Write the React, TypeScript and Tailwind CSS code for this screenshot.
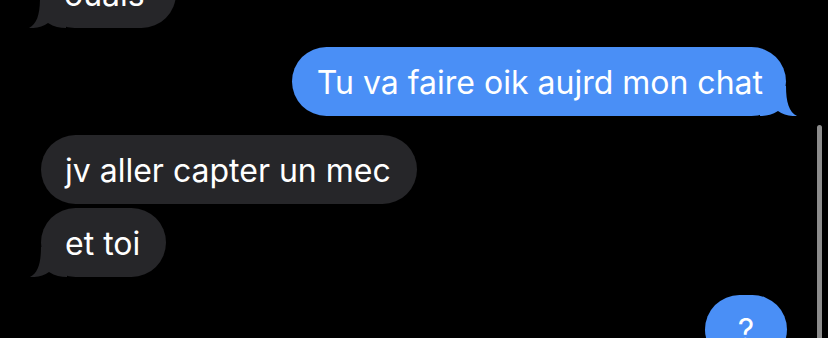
import React from 'react';

const TailRight = ({ color }: { color: string }) => (
	<svg
		className="absolute bottom-0 right-[-11px]"
		width="37"
		height="30"
		viewBox="0 0 37 30"
	>
		<path
			d="M0 30 L0 0 L26 0 C26 16 29 26 37 30 C30 30.5 23 28.5 18 25 C12 29 6 30 0 30 Z"
			fill={color}
		/>
	</svg>
);

const TailLeft = ({ color }: { color: string }) => (
	<svg
		className="absolute bottom-0 left-[-11px]"
		width="37"
		height="30"
		viewBox="0 0 37 30"
	>
		<path
			d="M37 30 L37 0 L11 0 C11 16 8 26 0 30 C7 30.5 14 28.5 19 25 C25 29 31 30 37 30 Z"
			fill={color}
		/>
	</svg>
);

const Received = ({
	text,
	tail = false,
	wide = false,
}: {
	text: string;
	tail?: boolean;
	wide?: boolean;
}) => (
	<div
		className={`relative flex h-[69px] w-fit items-center rounded-[35px] bg-[#262629] pt-[3px] pl-[24px] text-[32px] text-white ${
			wide ? 'pr-[31px]' : 'pr-[26px]'
		}`}
	>
		<span className="relative z-10 leading-none">{text}</span>
		{tail && <TailLeft color="#262629" />}
	</div>
);

const Sent = ({ text, tail = false }: { text: string; tail?: boolean }) => (
	<div className="relative flex h-[69px] w-fit items-center rounded-[35px] bg-[#4a8ff6] pt-[3px] pl-[25px] pr-[23px] text-[32px] text-white">
		<span className="relative z-10 leading-none">{text}</span>
		{tail && <TailRight color="#4a8ff6" />}
	</div>
);

const App = () => {
	return (
		<div
			className="relative h-[338px] w-[828px] overflow-hidden bg-black"
			style={{ fontFamily: 'Inter, "Noto Sans", sans-serif' }}
		>
			<div className="flex flex-col">
				<div className="mt-[-41px] ml-[40px]">
					<Received text="ouais" tail wide />
				</div>
				<div className="mt-[19px] mr-[42px] flex justify-end">
					<Sent text="Tu va faire oik aujrd mon chat" tail />
				</div>
				<div className="mt-[19px] ml-[41px] flex flex-col gap-[4px]">
					<Received text="jv aller capter un mec" />
					<Received text="et toi" tail />
				</div>
				<div className="mt-[18px] mr-[41px] flex justify-end">
					<div className="flex h-[69px] w-[82px] items-center justify-center rounded-[35px] bg-[#4a8ff6] pt-[3px] text-[32px] text-white">
						<span className="leading-none">?</span>
					</div>
				</div>
			</div>
			<div className="absolute top-[125px] right-[6px] h-[240px] w-[5px] rounded-full bg-[#8c8c8c]" />
		</div>
	);
};

export default App;
